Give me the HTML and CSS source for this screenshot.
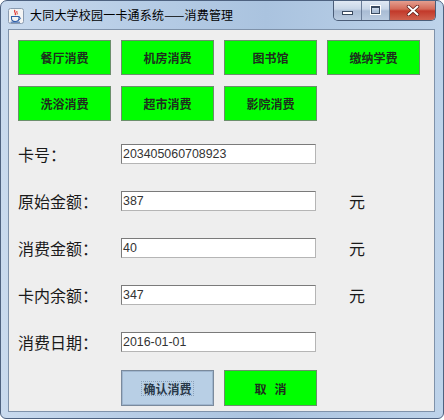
FILE: index.html
```html
<!DOCTYPE html>
<html>
<head>
<meta charset="utf-8">
<link rel="stylesheet" href="styles.css">
</head>
<body>
<div class="window">
  <div class="titlebar">
    <div class="app-icon">
      <svg width="16" height="16" viewBox="0 0 16 16">
        <rect x="0.5" y="0.5" width="15" height="15" rx="2" fill="#f4f4f4" stroke="#8a9bb0"/>
        <path d="M7 2 C5 4 9 5 7 7" stroke="#e0302a" stroke-width="1.2" fill="none"/>
        <path d="M9 3 C8 4.5 10 5 9 6.5" stroke="#e0302a" stroke-width="1" fill="none"/>
        <path d="M3.5 8.5 H11 V10.5 C11 12.5 9.5 13.5 7.2 13.5 C5 13.5 3.5 12.5 3.5 10.5 Z" fill="none" stroke="#3060a8" stroke-width="1.1"/>
        <path d="M11 9.2 C13 9.2 13 11.5 10.7 11.6" fill="none" stroke="#3060a8" stroke-width="1"/>
        <path d="M2.5 14.2 H12" stroke="#3060a8" stroke-width="1"/>
      </svg>
    </div>
    <div class="title">大同大学校园一卡通系统——消费管理</div>
    <div class="controls">
      <div class="ctl ctl-min"><span class="min-bar"></span></div>
      <div class="ctl ctl-max"><span class="max-box"></span></div>
      <div class="ctl ctl-close">
        <svg width="14" height="11" viewBox="0 0 14 11">
          <path d="M2.5 1.5 L11.5 9.5 M11.5 1.5 L2.5 9.5" stroke="#5a1a14" stroke-width="3.4" stroke-linecap="round"/>
          <path d="M2.5 1.5 L11.5 9.5 M11.5 1.5 L2.5 9.5" stroke="#ffffff" stroke-width="2" stroke-linecap="round"/>
        </svg>
      </div>
    </div>
  </div>
  <div class="client">
    <div class="btn-grid">
      <div class="gbtn">餐厅消费</div>
      <div class="gbtn">机房消费</div>
      <div class="gbtn">图书馆</div>
      <div class="gbtn">缴纳学费</div>
      <div class="gbtn">洗浴消费</div>
      <div class="gbtn">超市消费</div>
      <div class="gbtn">影院消费</div>
    </div>
    <div class="form">
      <div class="label">卡号：</div>
      <div class="field">203405060708923</div>
      <div class="unit"></div>

      <div class="label">原始金额：</div>
      <div class="field">387</div>
      <div class="unit">元</div>

      <div class="label">消费金额：</div>
      <div class="field">40</div>
      <div class="unit">元</div>

      <div class="label">卡内余额：</div>
      <div class="field">347</div>
      <div class="unit">元</div>

      <div class="label">消费日期：</div>
      <div class="field">2016-01-01</div>
      <div class="unit"></div>
    </div>
    <div class="actions">
      <div class="abtn abtn-confirm"><span class="focus">确认消费</span></div>
      <div class="abtn abtn-cancel">取&nbsp;&nbsp;&nbsp;消</div>
    </div>
  </div>
</div>
</body>
</html>
```

FILE: styles.css
```css
html, body {
  margin: 0;
  padding: 0;
  background: #ffffff;
}

.window {
  width: 444px;
  height: 419px;
  box-sizing: border-box;
  border: 1px solid #4e6280;
  border-radius: 7px 7px 6px 6px;
  background: linear-gradient(90deg, #c9daee 0%, #b7cde6 30%, #aac3df 60%, #bed3ea 100%);
  display: flex;
  flex-direction: column;
  position: relative;
  overflow: hidden;
}

.titlebar {
  height: 28px;
  display: flex;
  align-items: flex-start;
  position: relative;
}

.app-icon {
  margin: 7px 0 0 7px;
  width: 16px;
  height: 16px;
}

.title {
  margin: 6px 0 0 6px;
  font-family: "Noto Sans CJK SC", "Noto Sans", sans-serif;
  font-size: 12px;
  line-height: 16px;
  color: #000000;
  letter-spacing: 0.2px;
}

.controls {
  position: absolute;
  top: -1px;
  right: 7px;
  display: flex;
  height: 20px;
  border: 1px solid #4b5d78;
  border-top: none;
  border-radius: 0 0 5px 5px;
  overflow: hidden;
}

.ctl {
  height: 20px;
  display: flex;
  align-items: center;
  justify-content: center;
  box-sizing: border-box;
}

.ctl-min, .ctl-max {
  width: 28px;
  background: linear-gradient(180deg, #e3ebf5 0%, #c9d7e8 45%, #a9bcd4 55%, #b9cbe0 100%);
  border-right: 1px solid #6a7d98;
}

.ctl-min {
  border-radius: 0 0 0 4px;
}

.ctl-close {
  width: 45px;
  background: linear-gradient(180deg, #e6a596 0%, #d46a58 45%, #c2392a 55%, #d0614e 100%);
}

.min-bar {
  display: block;
  width: 9px;
  height: 2px;
  margin-top: 6px;
  background: #ffffff;
  border: 1px solid #3a4a60;
}

.max-box {
  display: block;
  width: 7px;
  height: 5px;
  border: 1px solid #3a4a60;
  border-top-width: 2px;
  background: transparent;
  box-shadow: 0 0 0 1px #ffffff;
}

.client {
  margin: 0 8px 6px 7px;
  flex: 1;
  background: #eeeeee;
  border: 1px solid #7f92aa;
  box-sizing: border-box;
  padding: 10px 0 0 9px;
  display: flex;
  flex-direction: column;
}

.btn-grid {
  display: grid;
  grid-template-columns: repeat(4, 93px);
  grid-auto-rows: 35px;
  column-gap: 10px;
  row-gap: 11px;
}

.gbtn {
  background: #00ff00;
  border: 1px solid #6b8f6b;
  box-sizing: border-box;
  display: flex;
  align-items: center;
  justify-content: center;
  font-family: "Noto Sans CJK SC", sans-serif;
  font-weight: 700;
  font-size: 12px;
  color: #1e2e1e;
}

.form {
  margin-top: 23px;
  display: grid;
  grid-template-columns: 103px 195px auto;
  grid-auto-rows: 20px;
  row-gap: 27px;
  align-items: center;
}

.label {
  font-family: "Noto Sans CJK SC", sans-serif;
  font-weight: 400;
  font-size: 16px;
  color: #1a1a1a;
  line-height: 20px;
}

.field {
  height: 20px;
  box-sizing: border-box;
  border: 1px solid #7a7a7a;
  border-right-color: #b5b5b5;
  border-bottom-color: #b5b5b5;
  background: #ffffff;
  font-family: "Liberation Sans", Arial, sans-serif;
  font-size: 12.4px;
  color: #333333;
  line-height: 18px;
  padding-left: 1px;
}

.unit {
  margin-left: 33px;
  font-family: "Noto Sans CJK SC", sans-serif;
  font-weight: 400;
  font-size: 16px;
  color: #1a1a1a;
  line-height: 20px;
}

.actions {
  margin-top: 18px;
  margin-left: 103px;
  display: flex;
  gap: 10px;
}

.abtn {
  width: 93px;
  height: 36px;
  box-sizing: border-box;
  display: flex;
  align-items: center;
  justify-content: center;
  font-family: "Noto Sans CJK SC", sans-serif;
  font-weight: 700;
  font-size: 12px;
  color: #1e2e1e;
}

.abtn-confirm {
  background: #b8cfe5;
  border: 1px solid #7a8a9c;
  box-shadow: inset 0 0 0 1px #9fb6cf;
  color: #283848;
}

.abtn-cancel {
  background: #00ff00;
  border: 1px solid #6b8f6b;
}

.focus {
  border: 1px dotted #8aa0b8;
  padding: 0 1px;
  line-height: 13px;
}
```
